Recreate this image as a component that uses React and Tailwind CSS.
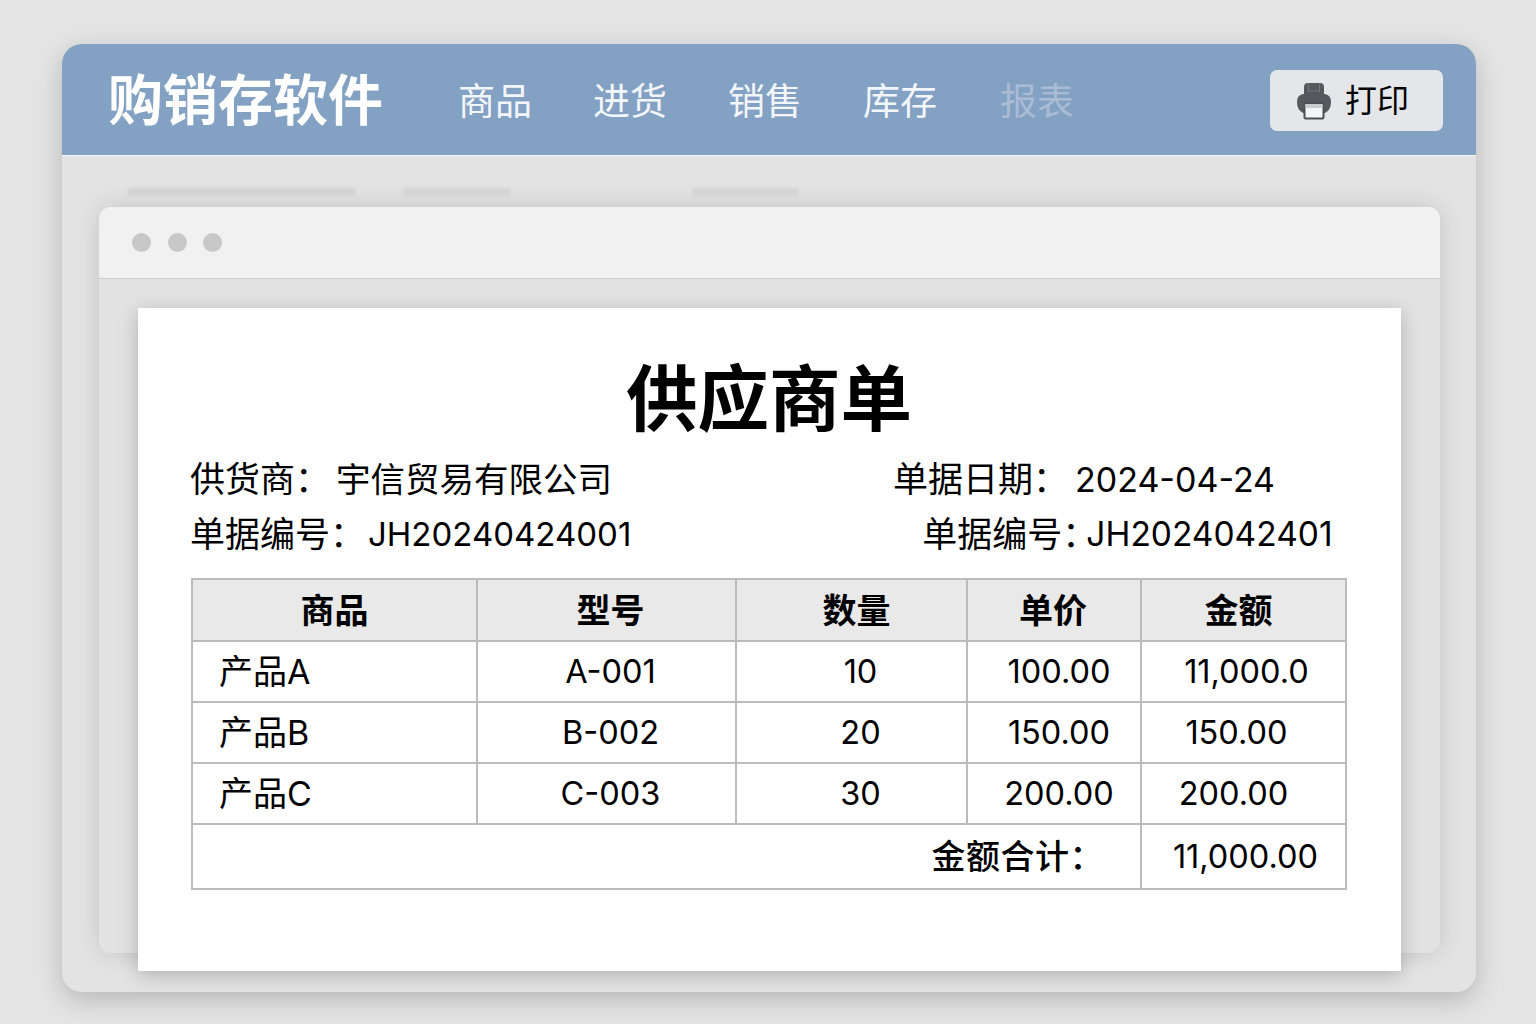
import React from "react"

const rows = [
  { name: "产品A", model: "A-001", qty: "10", price: "100.00", total: "11,000.0", totalPad: "pl-[6px]" },
  { name: "产品B", model: "B-002", qty: "20", price: "150.00", total: "150.00", totalPad: "pr-[14px]" },
  { name: "产品C", model: "C-003", qty: "30", price: "200.00", total: "200.00", totalPad: "pr-[20px]" },
]

const cell = "border-2 border-[#bbbbbb]"

function PrinterIcon() {
  return (
    <svg width="36" height="38" viewBox="0 0 36 38" className="shrink-0">
      <path d="M8 13V5q0-4 4-4h12q4 0 4 4v8z" fill="#55585c" />
      <path d="M12.5 2v8M23.5 2v8M12.5 9h11" stroke="#7d8084" strokeWidth="0.8" fill="none" />
      <path d="M7 12h22q6 1 6 8 0 8-6 11H7q-6-3-6-11 0-7 6-8z" fill="#55585c" />
      <rect x="8.5" y="21" width="19" height="15.5" rx="1" fill="#f4f5f6" stroke="#4c4f53" strokeWidth="2" />
      <rect x="9.5" y="22" width="17" height="4" fill="#c9cbce" />
    </svg>
  )
}

export default function App() {
  return (
    <div className="h-[1024px] w-[1536px] overflow-hidden bg-[#e4e4e4] pt-[44px] pl-[62px] font-['Inter','Noto_Sans_CJK_SC',sans-serif] text-black">
      <div className="h-[948px] w-[1414px] rounded-[20px] bg-[#e3e3e3] shadow-[0_8px_26px_rgba(0,0,0,0.2)]">
        <header className="flex h-[112px] items-center rounded-t-[20px] border-b border-b-[#f2f4f6] bg-[#83a1c3] pl-[46px] pr-[33px] text-white">
          <h1 className="mt-[2px] w-[350px] text-[55px] leading-none font-bold">购销存软件</h1>
          <nav className="mt-[3px] flex gap-[61px] text-[37px] leading-none text-[#f2f5f9]">
            <span>商品</span>
            <span>进货</span>
            <span>销售</span>
            <span>库存</span>
            <span className="ml-[2px] text-[#a9bcd4]">报表</span>
          </nav>
          <button className="mt-[2px] ml-auto flex h-[61px] w-[173px] items-center gap-[13px] rounded-[7px] bg-[#e4e6e9] pl-[26px] text-[32px] text-black">
            <PrinterIcon />
            打印
          </button>
        </header>

        <div className="pt-[32px] pl-[37px]">
          <div className="flex h-[8px] pl-[29px] blur-[1.5px]">
            <div className="w-[227px] bg-[#d2d2d2]" />
            <div className="ml-[48px] w-[107px] bg-[#d4d4d4]" />
            <div className="ml-[182px] w-[106px] bg-[#d4d4d4]" />
          </div>

          <div className="mt-[11px] h-[746px] w-[1341px] rounded-[12px] bg-[#e2e2e2] shadow-[0_0_24px_rgba(0,0,0,0.14)]">
            <div className="flex h-[72px] items-center gap-[16.5px] rounded-t-[12px] border-b border-[#cdcdcd] bg-[#f1f1f1] pl-[33px]">
              <span className="size-[19px] rounded-full bg-[#c8c8c8]" />
              <span className="size-[19px] rounded-full bg-[#c8c8c8]" />
              <span className="size-[19px] rounded-full bg-[#c8c8c8]" />
            </div>

            <main className="mt-[29px] ml-[39px] h-[663px] w-[1263px] bg-white px-[53px] pt-[48px] shadow-[0_4px_18px_rgba(0,0,0,0.22)]">
              <h2 className="-ml-[1px] text-center text-[71.5px] leading-[86px] font-bold">供应商单</h2>

              <div className="-ml-[1px] mt-[10px] flex h-[55px] items-center whitespace-nowrap text-[35px]">
                <span className="w-[146px]">供货商：</span>
                <span className="w-[277px] text-[34.5px]">宇信贸易有限公司</span>
                <span className="ml-[280px] w-[182px]">单据日期：</span>
                <span className="text-[34px]">2024-04-24</span>
              </div>
              <div className="-ml-[1px] flex h-[55px] items-center whitespace-nowrap text-[35px]">
                <span className="w-[178px]">单据编号：</span>
                <span className="text-[33px]">JH20240424001</span>
                <span className="ml-[291px] w-[164px]">单据编号：</span>
                <span className="text-[33.5px]">JH2024042401</span>
              </div>

              <table className="mt-[16px] w-[1154px] table-fixed border-collapse border-2 border-[#bbbbbb] text-[32.5px]">
                <colgroup>
                  <col className="w-[285px]" />
                  <col className="w-[259px]" />
                  <col className="w-[231px]" />
                  <col className="w-[174px]" />
                  <col className="w-[205px]" />
                </colgroup>
                <thead>
                  <tr className="h-[62px] bg-[#e9e9e9] text-[34px]">
                    <th className={`${cell} font-bold`}>商品</th>
                    <th className={`${cell} pl-[8px] font-bold`}>型号</th>
                    <th className={`${cell} pl-[10px] font-bold`}>数量</th>
                    <th className={`${cell} pr-[2px] font-bold`}>单价</th>
                    <th className={`${cell} pr-[10px] font-bold`}>金额</th>
                  </tr>
                </thead>
                <tbody>
                  {rows.map((row) => (
                    <tr key={row.name} className="h-[61px]">
                      <td className={`${cell} pl-[26px] text-[34px]`}>{row.name}</td>
                      <td className={`${cell} pt-[2px] pl-[8px] text-center`}>{row.model}</td>
                      <td className={`${cell} pt-[2px] pl-[18px] text-center`}>{row.qty}</td>
                      <td className={`${cell} pt-[2px] pl-[10px] text-center`}>{row.price}</td>
                      <td className={`${cell} pt-[2px] ${row.totalPad} text-center`}>{row.total}</td>
                    </tr>
                  ))}
                  <tr className="h-[65px]">
                    <td colSpan={4} className={`${cell} pr-[36px] text-right text-[34px] font-medium tracking-[0.5px]`}>金额合计：</td>
                    <td className={`${cell} pt-[2px] pl-[4px] text-center`}>11,000.00</td>
                  </tr>
                </tbody>
              </table>
            </main>
          </div>
        </div>
      </div>
    </div>
  )
}
